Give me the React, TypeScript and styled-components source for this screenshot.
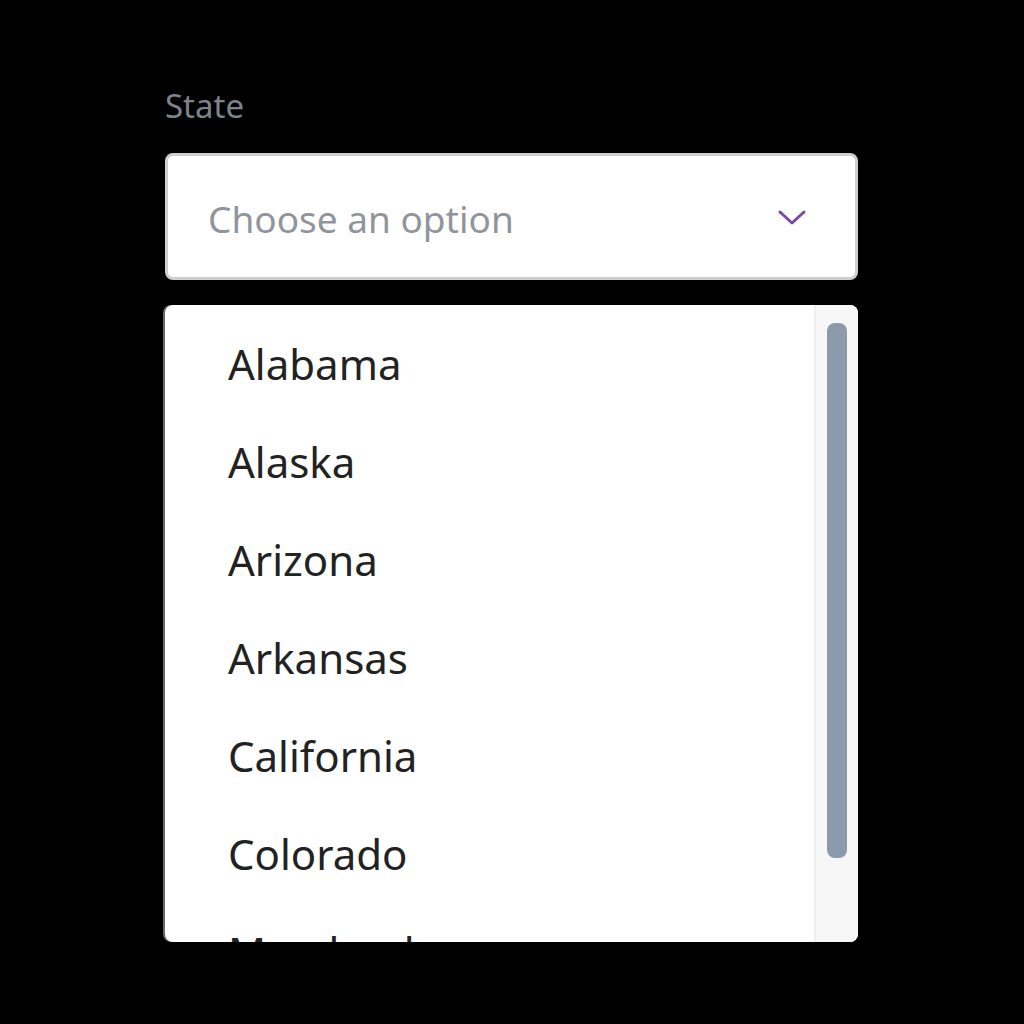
import React from "react";
import styled, { createGlobalStyle } from "styled-components";

const Global = createGlobalStyle`
  html, body { margin: 0; padding: 0; background: #000; }
  body { font-family: "Noto Sans", "Open Sans", sans-serif; }
`;

const Page = styled.div`
  width: 1024px;
  height: 1024px;
  background: #000;
  padding: 83px 0 0 165px;
  box-sizing: border-box;
  overflow: hidden;
`;

const Field = styled.div`
  width: 693px;
  display: flex;
  flex-direction: column;
`;

const Label = styled.label`
  font-size: 33px;
  color: #7d848b;
  line-height: 45px;
  margin-bottom: 25px;
`;

const SelectBox = styled.div`
  box-sizing: border-box;
  height: 127px;
  background: #fff;
  border: 3px solid #cfcfcf;
  border-radius: 8px;
  display: flex;
  align-items: center;
  justify-content: space-between;
  padding: 0 48px 0 40px;
`;

const Placeholder = styled.span`
  font-size: 37px;
  color: #90959c;
  padding-top: 4px;
`;

const Panel = styled.div`
  margin-top: 25px;
  height: 637px;
  background: #fff;
  border-radius: 8px;
  box-shadow: -2px 0 0 #6a6a6a;
  display: flex;
  overflow: hidden;
`;

const List = styled.ul`
  flex: 1;
  list-style: none;
  margin: 0;
  padding: 10px 0 0 63px;
`;

const Item = styled.li`
  font-size: 42px;
  color: #222;
  height: 98px;
  line-height: 98px;
  white-space: nowrap;
`;

const Track = styled.div`
  width: 44px;
  background: #f7f7f7;
  border-left: 2px solid #efefef;
  display: flex;
  justify-content: center;
  padding-top: 18px;
  box-sizing: border-box;
`;

const Thumb = styled.div`
  width: 20px;
  height: 535px;
  border-radius: 8px;
  background: #8c9bab;
`;

const states = [
  "Alabama",
  "Alaska",
  "Arizona",
  "Arkansas",
  "California",
  "Colorado",
  "Maryland",
];

const Chevron = () => (
  <svg width="30" height="20" viewBox="0 0 30 20">
    <polyline
      points="3,5 15,16 27,5"
      fill="none"
      stroke="#7c4aa2"
      strokeWidth="3"
      strokeLinecap="round"
      strokeLinejoin="round"
    />
  </svg>
);

export default function App() {
  return (
    <>
      <Global />
      <Page>
        <Field>
          <Label>State</Label>
          <SelectBox>
            <Placeholder>Choose an option</Placeholder>
            <Chevron />
          </SelectBox>
          <Panel>
            <List>
              {states.map((s) => (
                <Item key={s}>{s}</Item>
              ))}
            </List>
            <Track>
              <Thumb />
            </Track>
          </Panel>
        </Field>
      </Page>
    </>
  );
}
